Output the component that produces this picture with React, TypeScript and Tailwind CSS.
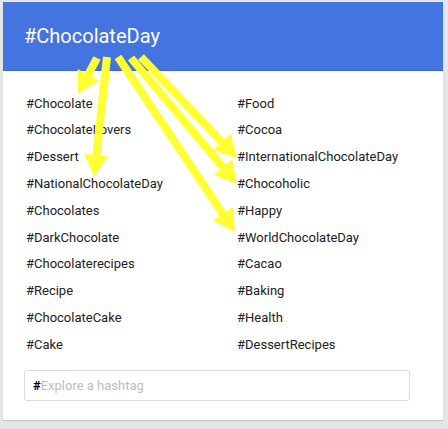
const left = [
  '#Chocolate',
  '#ChocolateLovers',
  '#Dessert',
  '#NationalChocolateDay',
  '#Chocolates',
  '#DarkChocolate',
  '#Chocolaterecipes',
  '#Recipe',
  '#ChocolateCake',
  '#Cake',
];

const right = [
  '#Food',
  '#Cocoa',
  '#InternationalChocolateDay',
  '#Chocoholic',
  '#Happy',
  '#WorldChocolateDay',
  '#Cacao',
  '#Baking',
  '#Health',
  '#DessertRecipes',
];

// annotation arrows: [x1, y1, x2(tip), y2(tip)]
const arrows = [
  [97, 58, 78, 94],
  [107, 57, 94, 177],
  [118, 57, 235, 232],
  [131, 58, 237, 184],
  [141, 57, 237, 158],
];

function Arrow({ a }: { a: number[] }) {
  const [x1, y1, x2, y2] = a;
  const dx = x2 - x1;
  const dy = y2 - y1;
  const len = Math.hypot(dx, dy);
  const ux = dx / len;
  const uy = dy / len;
  const headLen = 22;
  const headW = 12;
  const bx = x2 - ux * headLen;
  const by = y2 - uy * headLen;
  const px = -uy;
  const py = ux;
  const pts = `${x2},${y2} ${bx + px * headW},${by + py * headW} ${bx - px * headW},${by - py * headW}`;
  return (
    <g>
      <line x1={x1} y1={y1} x2={bx + ux * 2} y2={by + uy * 2} stroke="#FFFF33" strokeWidth={8} />
      <polygon points={pts} fill="#FFFF33" />
    </g>
  );
}

export default function App() {
  return (
    <div className="relative h-[429px] w-[448px] overflow-hidden bg-[#e6e6e6] pt-[2px] pl-[3px] font-['Roboto',sans-serif]">
      <div className="flex h-[418px] w-[440px] flex-col bg-white shadow-[0_1px_1px_rgba(0,0,0,0.15)]">
        <div className="flex h-[69px] items-center border-b border-[#3b68d6] bg-[#4374e0] pl-[21px] text-[20px] text-white">
          #ChocolateDay
        </div>
        <div className="grid grid-cols-[211px_1fr] pt-[19px] pl-[23px] text-[13px] text-[#222]">
          <div className="flex flex-col">
            {left.map((t) => (
              <div key={t} className="flex h-[26.8px] items-center">{t}</div>
            ))}
          </div>
          <div className="flex flex-col">
            {right.map((t) => (
              <div key={t} className="flex h-[26.8px] items-center">{t}</div>
            ))}
          </div>
        </div>
        <div className="mt-[12px] ml-[21px] flex h-[31px] w-[386px] items-center rounded-[3px] border border-[#dcdcdc] pl-[8px] text-[13px]">
          <span className="font-bold text-black">#</span>
          <span className="text-[#bdbdbd]">Explore a hashtag</span>
        </div>
      </div>
      <svg className="pointer-events-none absolute inset-0" width="448" height="429">
        {arrows.map((a, i) => (
          <Arrow key={i} a={a} />
        ))}
      </svg>
    </div>
  );
}
